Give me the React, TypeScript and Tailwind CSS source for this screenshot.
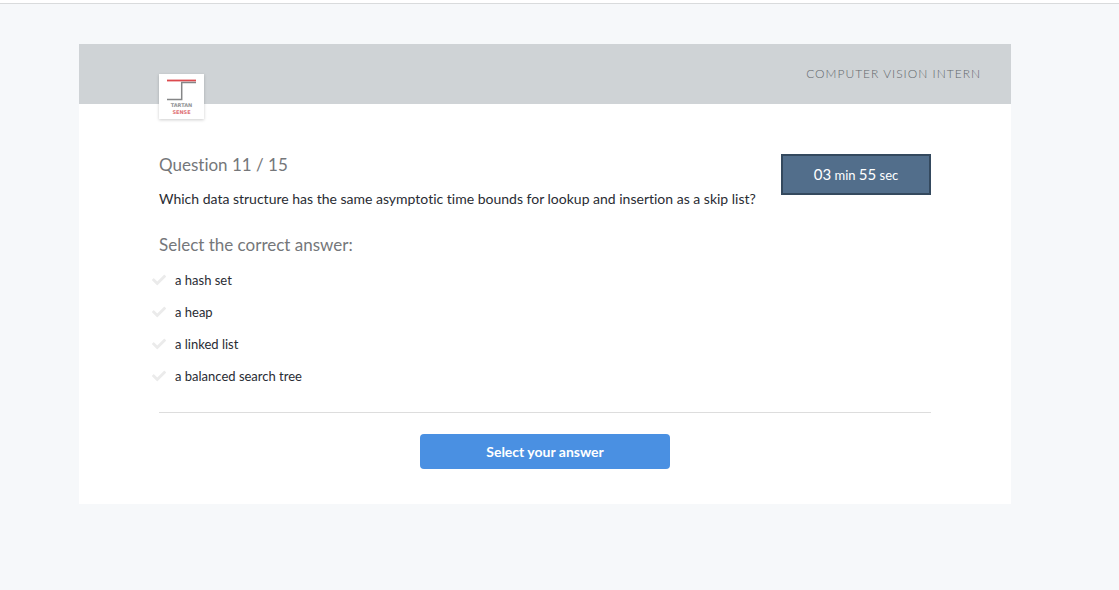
import { useState } from "react";
import { FaCheck } from "react-icons/fa";

const answers = ["a hash set", "a heap", "a linked list", "a balanced search tree"];

function Logo() {
  return (
    <svg viewBox="0 0 45 45" className="size-[45px]" role="img" aria-label="Tartan Sense">
      <rect x="8" y="5.6" width="29" height="1.8" fill="#dc4a4e" />
      <path d="M37 8.4H22.7V25.5H8" fill="none" stroke="#858687" strokeWidth="1.5" />
      <g fontFamily="DejaVu Sans, sans-serif" fontWeight="700" fontSize="5" textAnchor="middle">
        <text x="22.5" y="33" fill="#929496">TARTAN</text>
        <text x="22.5" y="39.5" fill="#e07276">SENSE</text>
      </g>
    </svg>
  );
}

export default function App() {
  const [selected, setSelected] = useState<string | null>(null);

  return (
    <div className="min-h-screen bg-[#f6f8fa] font-['Lato',sans-serif] text-[#292c33] [font-variant-ligatures:none]">
      <div className="h-1 border-b border-[#d9dbdc] bg-white" />
      <main className="pt-10 pr-[108px] pb-10 pl-[79px]">
        <section className="bg-white">
          <header className="relative flex h-15 items-center justify-end bg-[#cfd3d6] px-[30px]">
            <div className="absolute top-[30px] left-20 bg-white shadow-[0_1px_3px_rgba(0,0,0,0.2)]">
              <Logo />
            </div>
            <h1 className="text-xs leading-5 font-light tracking-[1px] text-[#62676c]">COMPUTER VISION INTERN</h1>
          </header>

          <form className="px-20 pt-[50px] pb-[35px]" onSubmit={(e) => e.preventDefault()}>
            <div className="flex items-start justify-between gap-5">
              <div>
                <h2 className="text-[17px] leading-[22px] text-[#75777a]">Question 11 / 15</h2>
                <p className="mt-[13px] text-sm leading-5">
                  Which data structure has the same asymptotic time bounds for lookup and insertion as a skip list?
                </p>
              </div>
              <div className="flex h-[41px] w-[150px] shrink-0 items-center justify-center border-2 border-[#34495e] bg-[#526e8b] text-white" role="timer">
                <p className="text-[15px] leading-5">
                  03<span className="text-[13px]"> min </span>55<span className="text-[13px]"> sec</span>
                </p>
              </div>
            </div>

            <fieldset className="mt-[25px]">
              <legend className="text-[17px] leading-[22px] text-[#75777a]">Select the correct answer:</legend>
              <div className="-ml-[7px] flex flex-col pt-2">
                {answers.map((answer) => (
                  <label key={answer} className="flex h-8 cursor-pointer items-center gap-[9px] text-[13px] leading-5">
                    <input
                      type="radio"
                      name="answer"
                      value={answer}
                      checked={selected === answer}
                      onChange={() => setSelected(answer)}
                      className="peer sr-only"
                    />
                    <FaCheck className="size-[14px] text-[#ebebeb] peer-checked:text-[#4a90e2]" aria-hidden="true" />
                    {answer}
                  </label>
                ))}
              </div>
            </fieldset>

            <div className="mt-5 flex justify-center border-t border-[#dddddd] pt-[21px]">
              <button type="submit" className="h-[35px] w-[250px] rounded-[4px] bg-[#4a90e2] text-sm font-bold text-white">
                Select your answer
              </button>
            </div>
          </form>
        </section>
      </main>
    </div>
  );
}
